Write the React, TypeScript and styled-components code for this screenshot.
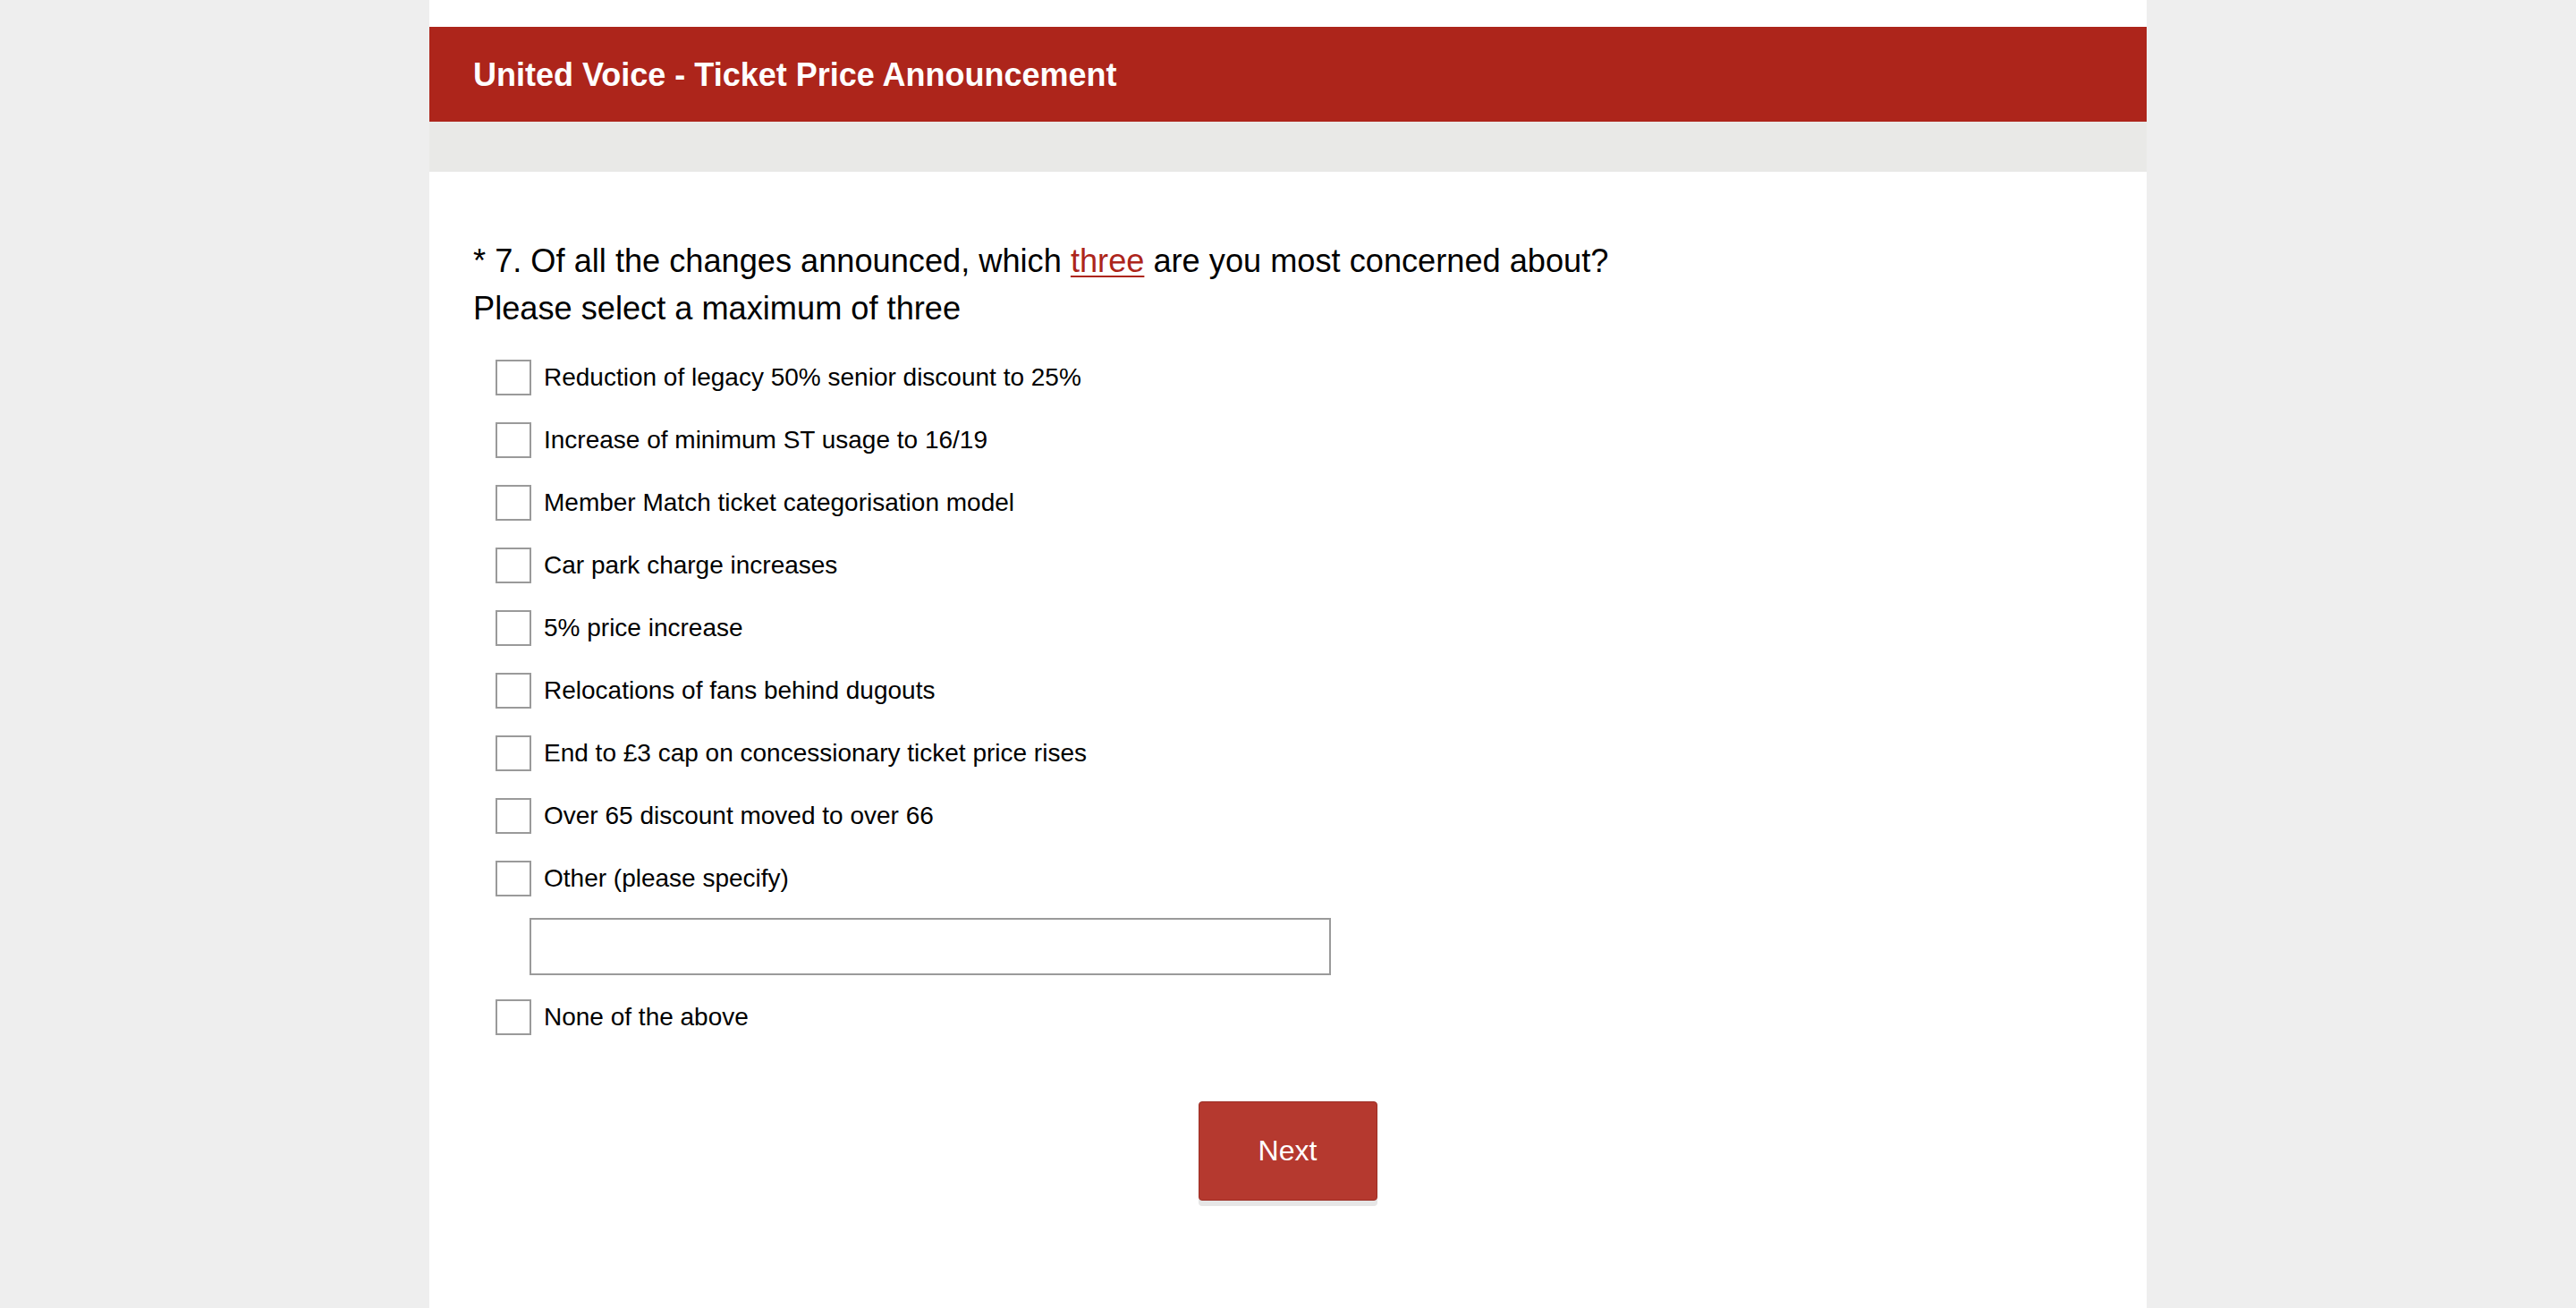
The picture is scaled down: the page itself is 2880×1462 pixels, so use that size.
import React from "react";
import styled, { createGlobalStyle } from "styled-components";

const Global = createGlobalStyle`
  html, body {
    margin: 0;
    padding: 0;
    background: #eeeeee;
    font-family: "Liberation Sans", Arial, sans-serif;
    color: #000;
  }
  #root { min-height: 100vh; }
`;

const Page = styled.div`
  display: flex;
  justify-content: center;
  min-height: 100vh;
`;

const Panel = styled.main`
  width: 1920px;
  background: #ffffff;
  padding-top: 30px;
  min-height: 1462px;
  box-sizing: border-box;
`;

const Header = styled.header`
  height: 106px;
  background: #ad251b;
  display: flex;
  align-items: center;
  padding-left: 49px;
  padding-top: 2px;
  box-sizing: border-box;
`;

const Title = styled.h1`
  margin: 0;
  font-size: 36px;
  font-weight: 700;
  color: #ffffff;
  letter-spacing: 0;
`;

const Band = styled.div`
  height: 56px;
  background: #e9e9e7;
`;

const Content = styled.section`
  padding: 73px 50px 0 49px;
`;

const Question = styled.h2`
  margin: 0;
  font-size: 36.2px;
  line-height: 53px;
  font-weight: 400;
`;

const Link = styled.a`
  color: #ad251b;
  text-decoration: underline;
  text-decoration-thickness: 2px;
  text-underline-offset: 4px;
`;

const Options = styled.div`
  display: flex;
  flex-direction: column;
  gap: 30px;
  padding-left: 25px;
  margin-top: 31px;
`;

const Row = styled.label`
  display: flex;
  align-items: center;
  gap: 14px;
  height: 40px;
  font-size: 28px;
  cursor: pointer;
`;

const Box = styled.span`
  width: 40px;
  height: 40px;
  box-sizing: border-box;
  border: 2px solid #9a9a9a;
  background: #fff;
  flex: none;
`;

const OtherInput = styled.input`
  display: block;
  width: 896px;
  height: 64px;
  box-sizing: border-box;
  border: 2px solid #9a9a9a;
  margin: -6px 0 -3px 38px;
  font-size: 28px;
  font-family: inherit;
  outline: none;
`;

const Footer = styled.div`
  display: flex;
  justify-content: center;
  margin-top: 74px;
`;

const NextButton = styled.button`
  width: 200px;
  height: 111px;
  background: #b5392f;
  border: 1px solid #9c2e25;
  border-radius: 4px;
  color: #fff;
  font-family: "Liberation Sans", Arial, sans-serif;
  font-size: 32px;
  box-shadow: 0 6px 0 #e6e6e6;
  cursor: pointer;
`;

const options = [
  "Reduction of legacy 50% senior discount to 25%",
  "Increase of minimum ST usage to 16/19",
  "Member Match ticket categorisation model",
  "Car park charge increases",
  "5% price increase",
  "Relocations of fans behind dugouts",
  "End to £3 cap on concessionary ticket price rises",
  "Over 65 discount moved to over 66",
  "Other (please specify)",
];

export default function App() {
  return (
    <>
      <Global />
      <Page>
        <Panel>
          <Header>
            <Title>United Voice - Ticket Price Announcement</Title>
          </Header>
          <Band />
          <Content>
            <Question>
              * 7. Of all the changes announced, which <Link>three</Link> are you most concerned about?
              <br />
              Please select a maximum of three
            </Question>
            <Options>
              {options.map((o) => (
                <Row key={o}>
                  <Box />
                  {o}
                </Row>
              ))}
              <OtherInput type="text" aria-label="Other (please specify)" />
              <Row>
                <Box />
                None of the above
              </Row>
            </Options>
            <Footer>
              <NextButton>Next</NextButton>
            </Footer>
          </Content>
        </Panel>
      </Page>
    </>
  );
}
